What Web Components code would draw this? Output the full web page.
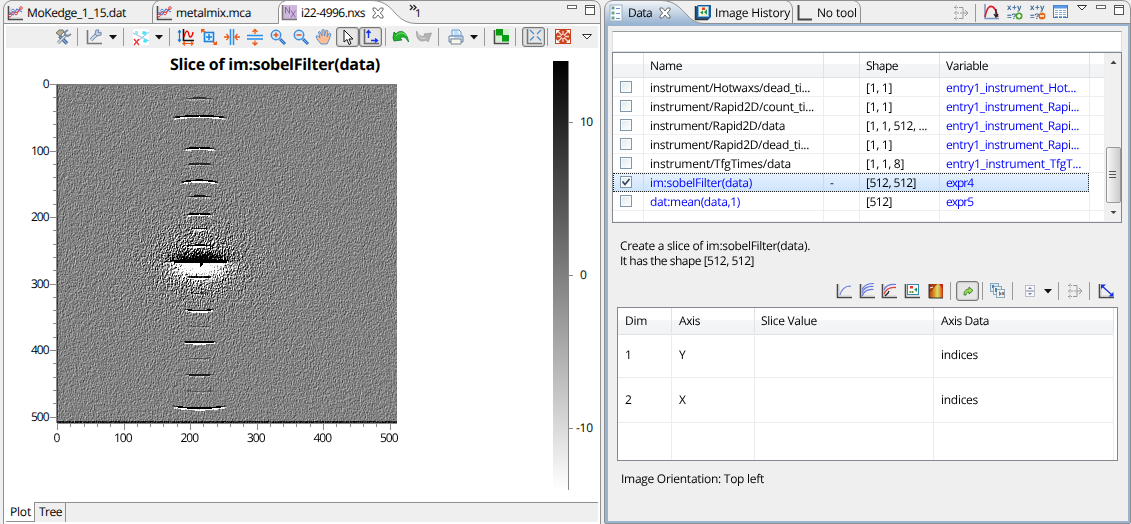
<!DOCTYPE html>
<html lang="en">
<head>
<meta charset="utf-8">
<title>Data slicing workbench</title>
<style>
html,body{margin:0;height:524px;overflow:hidden;background:#efefef}
body{font:12px/18px "Open Sans","Noto Sans",sans-serif;color:#000;text-rendering:geometricPrecision}
</style>
</head>
<body>
<app-window></app-window>
<script>
const define = (name, html, setup) => customElements.define(name, class extends HTMLElement {
  connectedCallback() {
    if (this.shadowRoot) return;
    const t = document.createElement('template');
    t.innerHTML = typeof html === 'function' ? html(this) : html;
    this.attachShadow({mode: 'open'}).append(t.content.cloneNode(true));
    if (setup) setup(this, this.shadowRoot);
  }
});

/* A label that tracks its letters so that it takes the given width. */
define('fit-text', `<style>:host{display:inline-block;white-space:pre}span{display:inline-block}</style><span><slot></slot></span>`, (el, root) => {
  const w = +el.getAttribute('w'), s = root.querySelector('span');
  if (!w) return;
  const n = el.textContent.length;
  s.style.letterSpacing = ((w - s.getBoundingClientRect().width) / n).toFixed(3) + 'px';
});

const L = '<path d="M1.500 1V14.500H16" fill="none" stroke="#4a4a4a" stroke-width="1.600"/><path d="M3 2V13H15" fill="none" stroke="#ccc"/>';
const gear = '<path d="M1 2.500H5M1 8H9M1 13.500H5M3 .5V4.500M3 6V10M3 11.500V15.500" stroke-dasharray="2 1"/><path d="M6 2.500H10V13.500H6M10 8H15M12 5L15 8L12 11"/>';
const mag = s => `<path d="M10 10L15 15" stroke="#2a6fc4" stroke-width="3"/><path d="M10.500 10.500L14.500 14.500" stroke="#7db9f5"/><circle cx="6" cy="6" r="4.700" fill="#d8ecfb" stroke="#3f8de0" stroke-width="1.500"/><path d="${s}" stroke="#e8501e" stroke-width="1.500"/>`;
const ICONS = {
  chart: L + '<path d="M3 11L6 6L9 9L14 3" fill="none" stroke="#e03c3c" stroke-width="1.300"/><path d="M2 7L6 10L10 4L15 7" fill="none" stroke="#5b7fd0" stroke-width="1.200"/><g fill="#fff" stroke="#e03c3c"><circle cx="3" cy="10.500" r="1.300"/><circle cx="9" cy="8.500" r="1.300"/><circle cx="14" cy="3" r="1.300"/></g><circle cx="6" cy="5.500" r="1.300" fill="#fff" stroke="#5b7fd0"/>',
  nx: '<rect x="2" y="0" width="14" height="14" fill="#cdb8dc"/><path d="M1.500 0V14.500H16" fill="none" stroke="#777" stroke-width="1.600"/><path d="M4.500 8.500V2L8.500 8.500V2M10 5.500L14.500 12.500M14.500 5.500L10 12.500" fill="none" stroke="#8b69a8"/>',
  close: '<path d="M3 3H5.500L8 6L10.500 3H13V5L10.300 8L13 11V13H10.500L8 10L5.500 13H3V11L5.700 8L3 5Z" fill="#fff" stroke="#666"/>',
  tools: '<path d="M4.500 7L12 14.500" stroke="#3d6694" stroke-width="3.500"/><path d="M5 7.500L12 14.500" stroke="#85add4" stroke-width="1.500"/><path d="M11 6L3 14" stroke="#66798e" stroke-width="3"/><path d="M11 6L3 14" stroke="#dbe5ef" stroke-width="1.500"/><path d="M1 4L4 1L8 1L9 3L5 7Z" fill="#b3ae9c" stroke="#7b7666"/><path d="M13 1L10 3V6L13 7L16 5" fill="none" stroke="#7b8da0" stroke-width="2"/>',
  axisWrench: '<path d="M1.500 1V14.500H16" fill="none" stroke="#777" stroke-width="1.600"/><path d="M5 11L10 6" stroke="#6f88aa" stroke-width="3.500"/><path d="M5 11L10 6" stroke="#ccdcf0" stroke-width="1.800"/><path d="M10 1L9 5L11 7L15 6L15 3L13 4L12 3L13 1Z" fill="#c3d0e2" stroke="#6f88aa"/>',
  arrow: '<path d="M4 6H12L8 10.500Z" fill="#111"/>',
  annotate: '<rect width="16" height="16" fill="#fff"/><path d="M0 4L16 12M5 12L16 3" stroke="#8fb8e6"/><path d="M1 10L6 16M6 10L1 16" stroke="#e33" stroke-width="1.300"/><path d="M10 2L14 3L12 6L9 5ZM11 10L15 11L13 14L10 13Z" fill="#45e6f5"/><rect x="2" y="2" width="3" height="3" fill="#8eecf6"/>',
  rescale: '<path d="M1.500 2V12M0 3.500L1.500 1.500L3 3.500M0 10.500L1.500 12.500L3 10.500" fill="none" stroke="#1573d8" stroke-width="1.200"/><path d="M5.500 0V11.500H16" fill="none" stroke="#111" stroke-width="1.600"/><path d="M6 8C8 0 10 1 11 6C12 9 14 9 15 3" fill="none" stroke="#e00" stroke-width="1.400"/><path d="M5 14.500H15M7 12.500L5 14.500L7 16.500M13 12.500L15 14.500L13 16.500" fill="none" stroke="#f05a14" stroke-width="1.200"/>',
  zoomBox: '<rect x="3.500" y="3.500" width="9" height="9" fill="#e3f2ff" stroke="#1683e2" stroke-width="1.600"/><path d="M8 5V11M5 8H11" stroke="#1683e2" stroke-width="1.500"/><path d="M0 0H4L3 1.500L5 3L4 4L2 2.500L0 4ZM16 16H12L13 14.500L11 13L12 12L14 13.500L16 12Z" fill="#f05a14"/>',
  hzoom: '<path d="M6.500 0V16M9.500 0V16" stroke="#278ee8" stroke-width="1.500"/><path d="M0 8H5M2.500 5L5 8L2.500 11M16 8H11M13.500 5L11 8L13.500 11" fill="none" stroke="#f05a14" stroke-width="1.300"/>',
  vzoom: '<path d="M0 6.500H16M0 10H16" stroke="#278ee8" stroke-width="1.500"/><path d="M8 0V5M5.500 3L8 .5L10.500 3M8 16V11.500M5.500 13.500L8 16L10.500 13.500" fill="none" stroke="#f05a14" stroke-width="1.300"/>',
  zoomIn: mag('M6 3.500V8.500M3.500 6H8.500'), zoomOut: mag('M3.500 6H8.500'),
  hand: '<path d="M5 15L1 10L0 7L2 7L4 9L2.500 3L4 2.500L6 7L6 1L8 .5L8.500 7L10 1L12 2L11 8L13.500 4L15 5L13 11L11 15Z" fill="#ffbd93" stroke="#4d90d2" stroke-width=".9"/>',
  pointer: '<path d="M4 1V13L7 10.500L9 15.500L11 14.500L9 10H13Z" fill="#fff" stroke="#111"/>',
  axisArrows: '<path d="M1.500 0V14.500H16" fill="none" stroke="#666" stroke-width="1.600"/><path d="M5.500 9V1.500M3.500 4L5.500 1.500L7.500 4M8 11.500H14M12 9.500L14.500 11.500L12 13.500" fill="none" stroke="#1432f0" stroke-width="1.400"/>',
  undo: '<path d="M0 9L1 3L3 5C7 0 14 2 15.500 13C13 8 10 7 7 9L9 11L1 12Z" fill="#21b52b" stroke="#08762b" stroke-width=".8"/><path d="M3 7C6 3 11 3 13.500 7" fill="none" stroke="#82e574"/>',
  redo: '<path d="M.5 2C0 10 4 14 10 11L12 13L15.500 4L8 5L9 7C5 8 3 7 .5 2Z" fill="#b4b4b4" stroke="#a0a0a0" stroke-width=".8"/><path d="M2 5C3 9 6 10 10 9" fill="none" stroke="#ddd"/>',
  print: '<path d="M4 7V1H11L13 3V7Z" fill="#eef7ff" stroke="#5d98cf"/><path d="M1 7H15V13H1Z" fill="#c3d3e8" stroke="#6c8bb0"/><path d="M3 10H13V15H3Z" fill="#f7f7ef" stroke="#7c8a95"/><path d="M6 3H10M6 5H11" stroke="#95bfe5"/><path d="M2 8.500H6" stroke="#fff"/>',
  green: L + '<rect x="3" y="0" width="13" height="12.500" fill="#d5efd3"/><rect x="3" y="0" width="7" height="6.500" fill="#0a9a12"/><rect x="9" y="6" width="7" height="6.500" fill="#07a015"/>',
  expand: '<path d="M1.500 0V14.500H16" fill="none" stroke="#777" stroke-width="1.600"/><path d="M4 1L8 5M15 1L11 5M4 11.500L8 7.500M15 11.500L11 7.500" fill="none" stroke="#4a8cca" stroke-width="1.200"/>',
  red: '<rect width="16" height="15" fill="#c8431d"/><path d="M7 6.500L3 2.500M9 6.500L13 2.500M7 8.500L3 12.500M9 8.500L13 12.500M8 2V6M8 9V13M2 7.500H6M10 7.500H14" fill="none" stroke="#f7d9cf" stroke-width="1.300"/><path d="M1 1H5L1 5ZM15 1H11L15 5ZM1 14H5L1 10ZM15 14H11L15 10Z" fill="#fff"/>',
  menu: '<path d="M3.500 5.500H12.500L8 10Z" fill="#fff" stroke="#333"/>',
  min: '<rect x="3.500" y="5.500" width="9" height="3" fill="#fff" stroke="#666"/>',
  max: '<rect x="3.500" y="3.500" width="9" height="9" fill="#fff" stroke="#555"/><path d="M3 5.500H13" stroke="#555"/>',
  list: '<rect x="1" y="0" width="12" height="16" fill="#f8fbff" stroke="#9db1c5"/><g stroke="#72a98b" fill="#3ba24d"><rect x="3" y="2" width="2" height="2"/><rect x="3" y="7" width="2" height="2"/><rect x="3" y="12" width="2" height="2"/></g><path d="M7 3.500H11M7 8.500H11M7 13.500H11" stroke="#6c8eca"/>',
  history: '<path d="M1 2L3 0H16V12L13 15H1Z" fill="#1d5a98"/><rect x="3.500" y="1.500" width="10" height="10" fill="#fff3cf" stroke="#7db6dd"/><path d="M.5 1V14.500H13" fill="none" stroke="#333" stroke-width="1.500"/><path d="M5 7.500L8 5.500V9.500ZM12 4V10L9 7Z" fill="#1e9c55"/><path d="M7 2.500H10V5H7Z" fill="#e33e2e"/>',
  axes: '<path d="M1.500 0V14.500H15" fill="none" stroke="#444" stroke-width="2"/>',
  gear: `<g fill="none" stroke="#999" stroke-width="1">${gear}</g>`,
  curveDown: '<path d="M1 0V14.500H15" fill="none" stroke="#7896bd" stroke-width="1.500"/><path d="M1 13C3 3 6 1 9 3C12 5 12 8 14 13" fill="none" stroke="#e11d2b" stroke-width="1.600"/><path d="M12 5V12M10 10L12 13L14 10" fill="none" stroke="#222" stroke-width="1.300"/>',
  table: '<rect x=".5" y="1.500" width="14" height="12" fill="#fff" stroke="#3d7bc5"/><path d="M1 3H14" stroke="#5d9ae4" stroke-width="3"/><path d="M2 6.500H13M2 8.500H13M2 10.500H13M2 12.500H13" stroke="#8faccc"/><path d="M5.500 5V14M9.500 5V14" stroke="#fff"/>',
  curve: L + '<path d="M4 12C5 7 9 3 14 3V4" fill="none" stroke="#6577e0" stroke-width="1.200"/>',
  curves: L + '<path d="M3 13C5 8 9 6 14.500 6.500M3 9.500C5 5 9 3 14.500 3.500M3 6.500C6 1 10 .5 15 .5" fill="none" stroke="#6577e0" stroke-width="1.200"/>',
  curvesRed: L + '<path d="M3 7C5 2 10 1 15 1.500" fill="none" stroke="#6577e0" stroke-width="1.200"/><path d="M3 11C5 6 10 4 15 4.500" fill="none" stroke="#e04040" stroke-width="1.300"/><path d="M4 13L7 10L8 8" fill="none" stroke="#222" stroke-width="1.400"/>',
  image: L + '<rect x="3.500" y="1.500" width="11" height="10" fill="#fff" stroke="#3585b5"/><path d="M10 6.500L13 4.500V9Z" fill="#219654"/><path d="M6 3H9V5.500H6Z" fill="#e33"/><path d="M5.500 8H7.500V10H5.500ZM8 8H9.500V10H8Z" fill="#6b9d4a"/>',
  surface: '<defs><linearGradient id="s"><stop stop-color="#a33a14"/><stop offset=".35" stop-color="#e38a1e"/><stop offset=".6" stop-color="#cfe070"/><stop offset=".8" stop-color="#e8932a"/><stop offset="1" stop-color="#b5301f"/></linearGradient></defs><rect x="1" y="1" width="14" height="14" fill="url(#s)"/><path d="M1 1H10C6 3 5 8 1 10Z" fill="#a02c16" opacity=".8"/><path d="M11 1H15V9C14 5 13 3 11 1Z" fill="#c3271c"/><path d="M2 5L5 4" stroke="#fff"/><path d="M1 1V15H15" fill="none" stroke="#333"/>',
  export: '<path d="M4 12C4 8 6 6 9 6V4L13 7.500L9 11V9C7 9 6 10 6 12Z" fill="#a6d858" stroke="#3e8a2b"/>',
  stack: '<g stroke="#86a9c0"><rect x=".5" y=".5" width="8" height="8" fill="#dce8ee"/><rect x="3.500" y="3.500" width="8" height="8" fill="#eef0ec"/><rect x="6.500" y="6.500" width="8" height="8" fill="#f4f1e7"/></g><path d="M9 8V13L12 11ZM5 5H7V9H5ZM2 2H4V5H2Z" fill="#5583b0"/><path d="M12 9H14V12H12Z" fill="#bd6e60"/>',
  split: '<rect x="3.500" y="2.500" width="9" height="5" fill="#f8f8fb" stroke="#bdbdca"/><rect x="3.500" y="8.500" width="9" height="5" fill="#f8f8fb" stroke="#bdbdca"/><path d="M6 6L8 4L10 6ZM6 10H10L8 12Z" fill="#6080bb"/>',
  diag: L + '<path d="M4 3L14 12" stroke="#1430e8" stroke-width="1.300"/><path d="M3 1.500H8L3 6ZM15.500 13.500H10.500L15.500 9Z" fill="#1430e8"/>'
};
define('tool-icon', el => `<style>:host{display:block;width:16px;height:16px;flex:none}
:host([on]){width:20px;height:17px;padding:1px 0 0 1px;border:1px solid #777;border-radius:3px;background:#e6e6e6;box-shadow:inset 0 0 2px #888}
svg{display:block;overflow:visible;margin:auto}</style><svg width="16" height="16" viewBox="0 0 16 16" fill="none">${ICONS[el.getAttribute('name')] || ''}</svg>`);

/* x+y=? with a small plus or minus badge */
define('expression-icon', el => `<style>:host{display:block;width:16px;height:17px;flex:none;font:bold 8px/9px "Liberation Sans",sans-serif;color:#36639a}
div{height:9px;overflow:hidden}.b{display:flex}svg{display:block;margin:0 0 0 -1px;width:8px;flex:none}fit-text{height:9px}</style><div><fit-text w="15">x+y</fit-text></div><div class="b"><fit-text w="9">=?</fit-text><svg width="8" height="8"><circle cx="4" cy="4" r="3.500" fill="${el.getAttribute('color')}"/><path d="${el.getAttribute('sign')}" stroke="#fff" stroke-width="1.500"/></svg></div>`);

/* Lays icons in a row, each one centred on its "at" coordinate. */
define('tool-bar', `<style>:host{display:flex;align-items:center}</style><slot></slot>`, el => {
  let x = +el.getAttribute('from');
  for (const c of el.children) {
    const w = c.localName === 'tool-sep' ? 1 : c.hasAttribute('on') ? 23 : 16;
    const left = +c.getAttribute('at') - w / 2;
    c.style.marginLeft = (Math.round(left) - x) + 'px';
    x = Math.round(left) + w;
  }
});
define('tool-sep', `<style>:host{display:block;width:1px;height:18px;background:#999;flex:none}</style>`);
const bar = list => list.trim().split(/\s+/).map(s => {
  const [n, at, on] = s.split(':');
  return n === '|' ? `<tool-sep at="${at}"></tool-sep>` : `<tool-icon name="${n}" at="${at}"${on ? ' on' : ''}></tool-icon>`;
}).join('');

define('tab-label', `<style>:host{display:flex;align-items:center;height:23px;gap:4px;padding-top:2px;box-sizing:border-box;flex:none}</style><slot></slot>`);

/* Tab strip: the drawn outline and the labels share one grid cell. */
define('tab-strip', `<style>:host{display:grid;grid-template-columns:minmax(0,1fr);height:24px;min-width:0}.bg,.fg{grid-area:1/1;min-width:0}.bg{height:24px}.fg{display:flex}</style><div class="bg"><slot name="outline"></slot></div><div class="fg"><slot></slot></div>`);

define('image-canvas', `<style>:host,canvas{display:block}</style><canvas width="340" height="339"></canvas>`, (el, root) => {
  const W = 340, H = 339, c = root.querySelector('canvas').getContext('2d'), img = c.createImageData(W, H);
  let seed = 4996;
  const rnd = () => {
    seed = (seed + 0x6D2B79F5) | 0;
    let t = Math.imul(seed ^ (seed >>> 15), 1 | seed);
    t = (t + Math.imul(t ^ (t >>> 7), 61 | t)) ^ t;
    return ((t ^ (t >>> 14)) >>> 0) / 4294967296;
  };
  const P = W + 3, g = new Float32Array(P * (H + 3));
  for (let i = 0; i < g.length; i++) g[i] = rnd() + rnd() + rnd() - 1.5;
  // y, half width, strength, drop of the ends
  const arcs = [[14.5,15,90,.6],[32,27,260,2],[64,16,190,1.3],[80,14,110,1],[96.5,19,250,2.3],[112.500,13,130,.5],[130,12,280,.8],[145,8,160,0],[161.500,13,300,.8],
    [193.500,13,300,-.6],[210,9,100,-1],[227,14,260,-1.500],[243,11,50,-.8],[258.5,16,300,-.6],[275,12,50,-.6],[291.5,15,120,-1],[308,16,45,-1.500],[324.500,27,220,-2.300]];
  for (let y = 0; y < H; y++) for (let x = 0; x < W; x++) {
    const k = (y + 1) * P + x + 1;
    const n = 1.15 * g[k] - .8 * g[k + P + 1] + .35 * g[k - P] - .35 * g[k + 1];
    const dx = x - 142, dy = y - 178;
    const r = Math.hypot(dx / 1.25, dy);
    let v = 130 + n * (28 + 105 * Math.exp(-r * r / 850) + 62 * Math.exp(-r / 36));
    for (const [ay, hw, s, d] of arcs) {
      const u = dx / hw;
      if (Math.abs(u) > 1) continue;
      const t = y - ay - d * u * u, f = s * Math.min(1, (1.05 - Math.abs(u)) * 2.6) * (.85 + n * .25);
      if (t >= -1.6 && t < 0) v -= f; else if (t >= 0 && t < 1.6) v += f * (s < 150 ? .4 : 1);
    }
    const e = Math.exp(-(dx * dx) / 420);
    if (dy < 0) v -= 400 * e * Math.exp(-(dy * dy) / 65); else v += 460 * e * Math.exp(-(dy * dy) / 150);
    if (dy >= -4 && dy < -1 && Math.abs(dx) < 29 && n < .4) v = 0;
    if (dy >= -2 && dy < 1 && dx > -26 && dx < 28) v = 0;
    if (dy >= 1 && dy < 4 && Math.abs(dx) < 24 && n > -.7) v = 255;
    if (dx > 0 && dx < 4 && dy >= 0 && dy < 6 - dx) v = 0;
    if (y < 2) v = 125 + n * 5;
    if (x < 1) v = 65 + n * 20;
    if (y > H - 3) v = 30 + n * 45;
    v = Math.max(0, Math.min(255, v));
    const i = (y * W + x) * 4;
    img.data[i] = img.data[i + 1] = img.data[i + 2] = v; img.data[i + 3] = 255;
  }
  c.putImageData(img, 0, 0);
});

const ticks = (n, f) => Array.from({length: n}, (_, i) => f(i)).join('');
define('slice-plot', () => `<style>
:host{display:grid;grid-template-columns:53px 340px 155px 1fr;grid-template-rows:29px 7px 339px 1fr;background:#fff}
svg{display:block;overflow:visible}
.t{grid-area:1/1/2/5;font-size:16px;font-weight:700;line-height:32px;padding-left:166px}
.y{grid-area:3/1}.i{grid-area:3/2}.x{grid-area:4/2}.c{grid-area:1/4/5/5;margin-top:13px}
text{font:12px "Open Sans",sans-serif}
</style>
<div class="t"><fit-text w="210">Slice of im:sobelFilter(data)</fit-text></div>
<svg class="y" width="53" height="339"><path stroke="#8a8a8a" d="M52.500 0V339 ${ticks(26, i => `M${i % 5 ? 49 : 46} ${Math.round(i * 13.3) + .5}H53`)}"/>
${ticks(6, i => `<text x="45.5" y="${i * 66.5 + 4}" text-anchor="end" textLength="${i ? 18.5 : 6}">${i * 100}</text>`)}</svg>
<image-canvas class="i"></image-canvas>
<svg class="x" width="340" height="25"><path stroke="#8a8a8a" d="M0 .5H340 ${ticks(26, i => `M${Math.round(i * 13.3) + .5} 0V${i % 5 ? 4 : 7}`)}"/>
${ticks(6, i => `<text x="${i * 66.5 - .2}" y="19" text-anchor="middle" textLength="${i ? 18.5 : 6}">${i * 100}</text>`)}</svg>
<svg class="c" width="48" height="430"><defs><linearGradient id="g" x2="0" y2="1"><stop/><stop offset="1" stop-color="#fff"/></linearGradient></defs>
<rect x="1" width="15" height="429" fill="url(#g)"/><path stroke="#888" d="M16.500 0V429M17 61.500H21M17 214.500H21M17 367.500H21"/>
<text x="28" y="65" textLength="13">10</text><text x="28" y="218" textLength="6">0</text><text x="24" y="371" textLength="17">-10</text></svg>`);

const rows = [
  ['instrument/Hotwaxs/dead_ti...',160,'','[1, 1]',26,'entry1_instrument_Hot...',130],
  ['instrument/Rapid2D/count_ti...',164,'','[1, 1]',26,'entry1_instrument_Rapi...',133],
  ['instrument/Rapid2D/data',135,'','[1, 1, 512, ...',61,'entry1_instrument_Rapi...',133],
  ['instrument/Rapid2D/dead_ti...',159,'','[1, 1]',26,'entry1_instrument_Rapi...',133],
  ['instrument/TfgTimes/data',141,'','[1, 1, 8]',38,'entry1_instrument_TfgT...',135],
  ['im:sobelFilter(data)',102,'-','[512, 512]',50,'expr4',27],
  ['dat:mean(data,1)',90,'','[512]',26,'expr5',27]];
define('data-table', () => `<style>
:host{display:grid;grid-template-columns:491px 17px;width:510px;border:1px solid #828790;background:#fff;box-sizing:border-box;height:171px;overflow:hidden}
.r{display:grid;grid-template-columns:31px 180px 36px 80px 150px 14px;height:19px;line-height:20px;box-sizing:border-box}
.r>div{border-right:1px solid #e9eef5;border-bottom:1px solid #edeff2;padding-left:6px;box-sizing:border-box;overflow:hidden}
.h{height:25px}.h>div{background:linear-gradient(#fff 45%,#f4f5f7 46%,#f2f3f5);border-color:#dfe2e7;line-height:25px}
.h>div:last-child,.r>div:last-child{border-right:0}
.b{color:#00f}.last{height:11px}
.s{outline:1px dotted #222;outline-offset:-1px;background:linear-gradient(#e8f2fe,#cbe3fc);width:476px;grid-template-columns:31px 180px 36px 80px 149px 0}
.s>div{border-bottom:0;border-right-color:#c7dcf2}.s>div:last-child{display:none}
u{display:block;box-sizing:border-box;width:12px;height:12px;border:1px solid #8396aa;background:linear-gradient(135deg,#dfe8ed,#fff);box-shadow:inset 0 0 0 1px #f6fbfc;margin:3px 0 0 1px}
u svg{display:block}
.sb{display:flex;flex-direction:column;background:#f0f0f0;border-left:1px solid #eee;align-items:center}
.th{width:13px;height:54px;margin-top:79px;border:1px solid #999;border-radius:2px;background:linear-gradient(90deg,#f8f8f8,#e1e1e1 50%,#ccc);display:flex;align-items:center;justify-content:center}
</style><div><div class="r h"><div></div><div><fit-text w="32">Name</fit-text></div><div></div><div><fit-text w="32">Shape</fit-text></div><div><fit-text w="42">Variable</fit-text></div><div></div></div>
${rows.map((r, i) => `<div class="r${i === 5 ? ' s' : ''}"><div><u>${i === 5 ? '<svg width="10" height="10"><path d="M1.500 4.500L4 7.500L8.500 2" fill="none" stroke="#34465f" stroke-width="1.700"/></svg>' : ''}</u></div><div class="${i > 4 ? 'b' : ''}"><fit-text w="${r[1]}">${r[0]}</fit-text></div><div>${r[2]}</div><div><fit-text w="${r[4]}">${r[3]}</fit-text></div><div class="b"><fit-text w="${r[6]}">${r[5]}</fit-text></div><div></div></div>`).join('')}
<div class="r last"><div></div><div></div><div></div><div></div><div></div><div></div></div></div>
<div class="sb"><svg width="15" height="15"><path d="M4.500 11L7.500 7.500L10.500 11Z" fill="#444"/></svg><div class="th"><svg width="8" height="8"><path d="M0 .5H7M0 3.500H7M0 6.500H7" stroke="#555"/></svg></div><svg width="15" height="17"><path d="M4.500 8L7.500 11L10.500 8Z" fill="#444"/></svg></div>`);

define('slice-table', `<style>
:host{display:block;width:501px;border:1px solid #828790;background:#fff;box-sizing:border-box;height:154px;overflow:hidden}
.r{display:grid;grid-template-columns:54px 83px 179px 180px 1fr;height:45px;line-height:45px}
.r>div{border-right:1px solid #ececee;border-bottom:1px solid #ececee;padding-left:7px;box-sizing:border-box}
.r>div:nth-child(3){padding-left:6px}
.r>div:last-child{border-right:0;border-bottom:0;padding:0;background:#fff}.h{height:24px;line-height:26px}.h>div{background:linear-gradient(#fff 45%,#f5f6f7 46%,#f2f3f5);border-color:#dfe2e7}
</style><div class="r h"><div><fit-text w="22">Dim</fit-text></div><div><fit-text w="21">Axis</fit-text></div><div><fit-text w="56">Slice Value</fit-text></div><div><fit-text w="48">Axis Data</fit-text></div><div></div></div>
<div class="r"><div>1</div><div>Y</div><div></div><div><fit-text w="37">indices</fit-text></div><div></div></div>
<div class="r"><div>2</div><div>X</div><div></div><div><fit-text w="37">indices</fit-text></div><div></div></div>
<div class="r"><div></div><div></div><div></div><div></div><div></div></div>`);

define('plot-editor', `<style>
:host{display:grid;grid-template-columns:minmax(0,1fr);grid-template-rows:24px 1fr;width:601px;height:524px;flex:none}
.body{display:grid;grid-template-columns:minmax(0,1fr);grid-template-rows:24px 454px 22px;margin-left:3px;border:solid #909090;border-width:0 1px;background:#fff}
tool-bar{background:#efefef;margin:2px 2px 0;height:22px}
.tabs{display:flex;margin:0 2px;background:#efefef;height:20px;line-height:17px;box-sizing:border-box;border-top:1px solid #909090}
.p{width:28px;background:#fff;border-bottom:1px solid #909090;margin-top:-1px;padding:1px 0 0 4px;box-sizing:border-box;height:20px}
.q{border:solid #909090;border-width:0 1px;width:32px;padding-left:4px;box-sizing:border-box}
</style><tab-strip>
<svg slot="outline" width="601" height="24" fill="none" stroke="#909090"><path fill="#fff" d="M278.500 24V9Q279 2 286 .5H372C386 .5 392 10 397 15Q405 23.500 416 23.500H600V24Z" stroke="none"/><path fill="#efefef" stroke="none" d="M379 0C390 3 393 12 399 17Q405 23 416 23H600V0Z"/><path d="M3.500 24V9Q4 2 11 .5H592Q600 .5 600.500 9V24M152.500 23V9Q153 2 159 .5M278.500 23.500V9Q279 2 286 .5M4 23.500H278.500M372 .5C386 .5 392 10 397 15Q405 23.500 416 23.500H600"/></svg>
<tab-label style="margin-left:7px"><tool-icon name="chart"></tool-icon><fit-text w="99">MoKedge_1_15.dat</fit-text></tab-label>
<tab-label style="margin-left:30px"><tool-icon name="chart"></tool-icon><fit-text w="75">metalmix.mca</fit-text></tab-label>
<tab-label style="margin-left:30px"><tool-icon name="nx"></tool-icon><fit-text w="64">i22-4996.nxs</fit-text><tool-icon name="close" style="margin-left:1px"></tool-icon></tab-label>
<tab-label style="margin-left:23px;gap:0"><svg width="8" height="18" fill="none" stroke="#222" stroke-width="1.300"><path d="M1 1L3.500 3.500L1 6M4.500 1L7 3.500L4.500 6"/></svg><fit-text style="margin:3px 0 0 -2px;font-size:11px">1</fit-text></tab-label>
<tool-icon name="min" style="margin:0 0 0 143px"></tool-icon><tool-icon name="max" style="margin:2px 0 0 2px"></tool-icon>
</tab-strip>
<div class="body"><tool-bar from="6">${bar('tools:63 |:77.5 axisWrench:94 arrow:113 |:123.5 annotate:141 arrow:159 |:169.5 rescale:186 zoomBox:209 hzoom:232 vzoom:255 zoomIn:278 zoomOut:301 hand:324 pointer:347.5:1 axisArrows:370.5:1 |:385 undo:401 redo:424 |:438.5 print:456 arrow:474 |:484.5 green:501 |:515.5 expand:533.5:1 |:547 red:563 menu:587')}</tool-bar>
<slice-plot></slice-plot>
<div class="tabs"><div class="p"><fit-text w="21">Plot</fit-text></div><div class="q"><fit-text w="23">Tree</fit-text></div></div></div>`);

define('data-view', `<style>
:host{display:grid;grid-template-columns:minmax(0,1fr);grid-template-rows:24px 1fr;width:527px;height:524px;flex:none}
.body{border:solid #99b4d1;border-width:2px 2px 2px 3px;margin-right:1px;box-shadow:-1px 0 #909090,1px 0 #909090,0 1px #909090;background:#efefef;margin-left:1px;margin-bottom:1px;padding:5px 5px 0 4px;box-sizing:border-box;height:499px}
.in{height:21px;width:510px;box-sizing:border-box;background:#fff;border:1px solid #dde0e4;border-top-color:#9a9da2}
.msg{padding:15px 0 0 8px;height:49px;line-height:15px;box-sizing:border-box}
tool-bar{height:22px;margin-top:8px}
slice-table{margin:5px 0 0 5px}
.o{padding:9px 0 0 9px}
</style><tab-strip>
<svg slot="outline" width="527" height="24" viewBox="604 0 527 24" fill="none" stroke="#909090"><defs><linearGradient id="b" x2="0" y2="1"><stop stop-color="#f4f7fa"/><stop offset="1" stop-color="#99b4d1"/></linearGradient></defs><path stroke="none" fill="url(#b)" d="M604.500 24V9Q605 2 612 .5H661C675 .5 681 9 687 15Q694 23.500 704 23.500V24Z"/><path d="M604.500 24V9Q605 2 612 .5H1122Q1130 .5 1130.500 9V24M661 .5C675 .5 681 9 687 15Q694 23.500 704 23.500H1130M792.500 23V9Q792 2 786 .5M860.500 23V9Q860 2 854 .5"/></svg>
<tab-label style="margin-left:5px"><tool-icon name="list"></tool-icon><fit-text w="24" style="margin-left:-1px">Data</fit-text><tool-icon name="close" style="margin-left:1px"></tool-icon></tab-label>
<tab-label style="margin-left:22px"><tool-icon name="history"></tool-icon><fit-text w="75">Image History</fit-text></tab-label>
<tab-label style="margin-left:7px"><tool-icon name="axes"></tool-icon><fit-text w="40">No tool</fit-text></tab-label>
<tool-icon name="gear" style="margin:5px 0 0 96px"></tool-icon><tool-sep style="margin:4px 0 0 6px"></tool-sep><tool-icon name="curveDown" style="margin:4px 0 0 8px"></tool-icon>
<expression-icon color="#4da32f" sign="M2 4H6M4 2V6" style="margin:3px 0 0 7px"></expression-icon><expression-icon color="#e46a1c" sign="M2 4H6" style="margin:3px 0 0 7px"></expression-icon>
<tool-icon name="table" style="margin:4px 0 0 7px"></tool-icon><tool-icon name="menu" style="margin:0 0 0 5px"></tool-icon><tool-icon name="min" style="margin:0 0 0 3px"></tool-icon><tool-icon name="max" style="margin:2px 0 0 2px"></tool-icon>
</tab-strip>
<div class="body"><div class="in"></div><data-table></data-table>
<div class="msg"><fit-text w="190">Create a slice of im:sobelFilter(data).</fit-text><br><fit-text w="134">It has the shape [512, 512]</fit-text></div>
<tool-bar from="612">${bar('curve:844 curves:867 curvesRed:889 image:912 surface:936 |:950.5 export:967.5:1 |:982 stack:998 |:1012.5 split:1030 arrow:1048 |:1058.5 gear:1075 |:1089.5 diag:1106')}</tool-bar>
<slice-table></slice-table><div class="o"><fit-text w="143">Image Orientation: Top left</fit-text></div></div>`);

define('app-window', `<style>:host{display:flex;gap:3px;width:1131px;height:524px;background:#efefef;overflow:hidden}</style><plot-editor></plot-editor><data-view></data-view>`);
</script>
</body>
</html>
